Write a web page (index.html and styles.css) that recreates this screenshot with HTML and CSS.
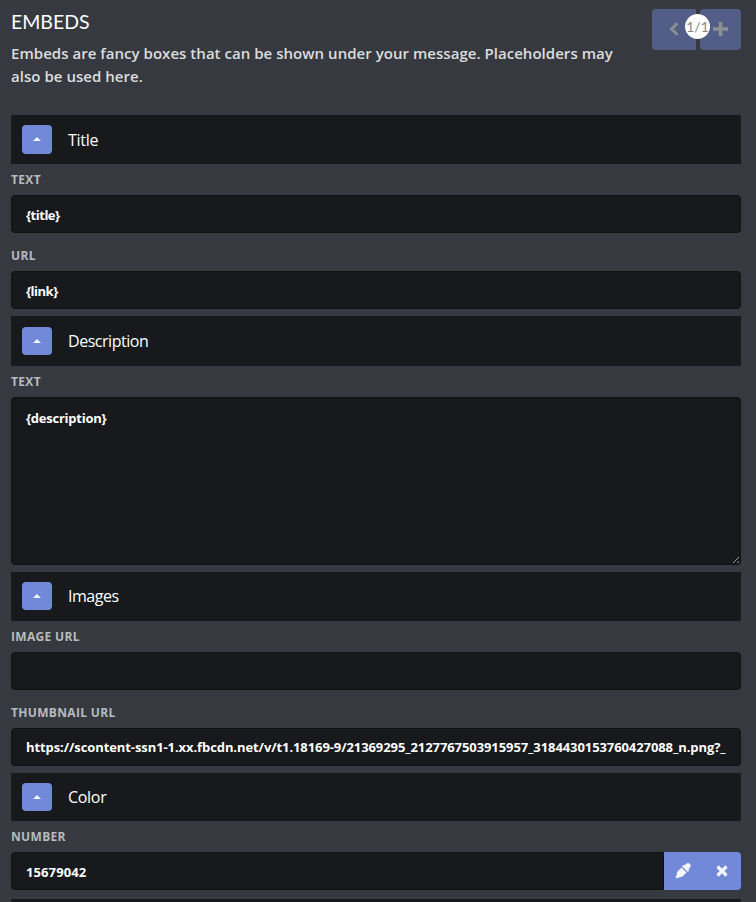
FILE: index.html
```html
<!DOCTYPE html>
<html lang="en">
<head>
<meta charset="utf-8">
<title>Embeds</title>
<link rel="stylesheet" href="styles.css">
</head>
<body>
<main class="panel">
  <header class="head">
    <div class="intro">
      <h1>EMBEDS</h1>
      <p>Embeds are fancy boxes that can be shown under your message. Placeholders may<br>also be used here.</p>
    </div>
    <div class="pager">
      <button class="page-btn prev" disabled aria-label="Previous"><svg width="10" height="14" viewBox="0 0 10 14"><path d="M8.400 1.200 2.600 7l5.800 5.800" fill="none" stroke="currentColor" stroke-width="3"/></svg></button>
      <button class="page-btn next" disabled aria-label="Add"><svg width="15" height="14" viewBox="0 0 15 14"><path d="M7.500 0v14M0 7h15" fill="none" stroke="currentColor" stroke-width="3.600"/></svg></button>
      <span class="count">1/1</span>
    </div>
  </header>

  <section>
    <div class="bar raised"><button class="toggle toggle-tall" aria-label="Toggle"><svg width="8" height="4" viewBox="0 0 8 4"><path d="M0 4 4 0l4 4z" fill="currentColor"/></svg></button><h2 class="t-title">Title</h2></div>
    <label class="first" for="t">TEXT</label>
    <input id="t" class="short-value" value="{title}">
    <label for="u">URL</label>
    <input id="u" class="short-value" value="{link}">
  </section>

  <section>
    <div class="bar tall"><button class="toggle" aria-label="Toggle"><svg width="8" height="4" viewBox="0 0 8 4"><path d="M0 4 4 0l4 4z" fill="currentColor"/></svg></button><h2>Description</h2></div>
    <label class="first" for="d">TEXT</label>
    <textarea id="d">{description}</textarea>
  </section>

  <section>
    <div class="bar raised"><button class="toggle" aria-label="Toggle"><svg width="8" height="4" viewBox="0 0 8 4"><path d="M0 4 4 0l4 4z" fill="currentColor"/></svg></button><h2>Images</h2></div>
    <label class="first" for="i">IMAGE URL</label>
    <input id="i" value="">
    <label for="th">THUMBNAIL URL</label>
    <input id="th" class="v-thumb" value="https://scontent-ssn1-1.xx.fbcdn.net/v/t1.18169-9/21369295_2127767503915957_3184430153760427088_n.png?_">
  </section>

  <section class="color">
    <div class="bar short"><button class="toggle" aria-label="Toggle"><svg width="8" height="4" viewBox="0 0 8 4"><path d="M0 4 4 0l4 4z" fill="currentColor"/></svg></button><h2 class="t-color">Color</h2></div>
    <label class="first" for="n">NUMBER</label>
    <div class="group">
      <input id="n" class="v-number" value="15679042">
      <div class="actions">
        <button aria-label="Pick color"><svg width="16" height="16" viewBox="0 0 16 16" fill="currentColor"><path d="M9.700 2.200 11 1c1.200-1.200 2.900-1.200 3.900-.1 1.100 1.100 1.100 2.700-.1 3.900L13.500 6.200l.4.600c.3.400.2.800-.1 1.100l-1 1L7 3.200l1-1c.4-.4 1.100-.4 1.700 0z"/><path d="M6.500 4.400l5.100 5.100-3.800 3.700c-.5.500-1.100.8-1.800.9l-2.200.3L2 15.500l-1.500-1.500 1.100-1.800.3-2.200c.1-.7.400-1.300.9-1.800z"/></svg></button>
        <button aria-label="Clear"><svg width="12" height="12" viewBox="0 0 12 12"><path d="m1.500 1.500 9 9m0-9-9 9" fill="none" stroke="currentColor" stroke-width="3.200"/></svg></button>
      </div>
    </div>
  </section>
  <div class="bar next-section"></div>
</main>
</body>
</html>
```
FILE: styles.css
```css
* { box-sizing: border-box; }
html, body { height: 902px; overflow: hidden; }
body {
  margin: 0;
  background: #36393f;
  color: #fff;
  font-family: "Open Sans", "Noto Sans", sans-serif;
}
.panel { padding: 0 15px 0 11px; }
.head { display: flex; justify-content: space-between; height: 115px; }
h1 { margin: 11px 0 0; font: 400 19.5px/22px Lato, sans-serif; }
p { margin: 9px 0 0; font-size: 15px; line-height: 23px; font-weight: 600; letter-spacing: 0.035px; color: #dcddde; white-space: nowrap; }
.pager { position: relative; display: flex; gap: 4px; height: 41px; margin-top: 9px; }
button { border: 0; padding: 0; background: #7289da; color: #f4f6fd; display: flex; align-items: center; justify-content: center; }
.page-btn { background: #525e88; color: #8b8f96; padding-bottom: 2px; }
.prev { width: 44px; border-radius: 4px 0 0 4px; }
.next { width: 41px; border-radius: 4px; }
.count {
  position: absolute; left: 33px; top: 5px; width: 25px; height: 25px;
  border-radius: 50%; background: #fff; color: #888;
  font: 400 14px/26px Lato, sans-serif; text-align: center;
}
section { margin-bottom: 7px; }
.bar { display: flex; align-items: center; gap: 16px; height: 49px; padding-left: 11px; background: #18191c; }
.raised { padding-bottom: 1px; }
.tall { height: 50px; }
.short { height: 48px; }
.next-section { height: 3px; }
.toggle { width: 30px; height: 28px; border-radius: 4px; }
.toggle-tall { height: 29px; }
h2 { margin: 0; font-size: 16px; line-height: 22px; font-weight: 400; letter-spacing: -0.46px; }
.t-title, .t-color { letter-spacing: -0.3px; }
.t-title { padding-top: 2px; }
label { display: block; height: 38px; padding-top: 14px; font-size: 12px; line-height: 17px; font-weight: 700; letter-spacing: 0.33px; color: #b9bbbe; }
label.first { height: 31px; padding-top: 7px; }
input, textarea {
  display: block; width: 100%; height: 38px; margin: 0; padding: 2px 14px 0;
  border: 1px solid #101113; border-radius: 4px; background: #18191c; color: #fff;
  font: 700 13px/20px "Open Sans", "Noto Sans", sans-serif; letter-spacing: -0.25px; outline: 0;
}
textarea { height: 168px; padding-top: 10px; resize: both; }
.v-thumb { padding-top: 0; letter-spacing: -0.085px; }
.short-value { letter-spacing: -0.5px; }
.v-number { letter-spacing: 0.1px; padding-top: 1px; }
.group { display: flex; }
.group input { flex: 1; min-width: 0; border-radius: 4px 0 0 4px; }
.actions { display: flex; width: 77px; background: #7289da; border-radius: 0 4px 4px 0; }
.actions button { flex: 1; background: none; }
.color { margin-bottom: 9px; }
```
